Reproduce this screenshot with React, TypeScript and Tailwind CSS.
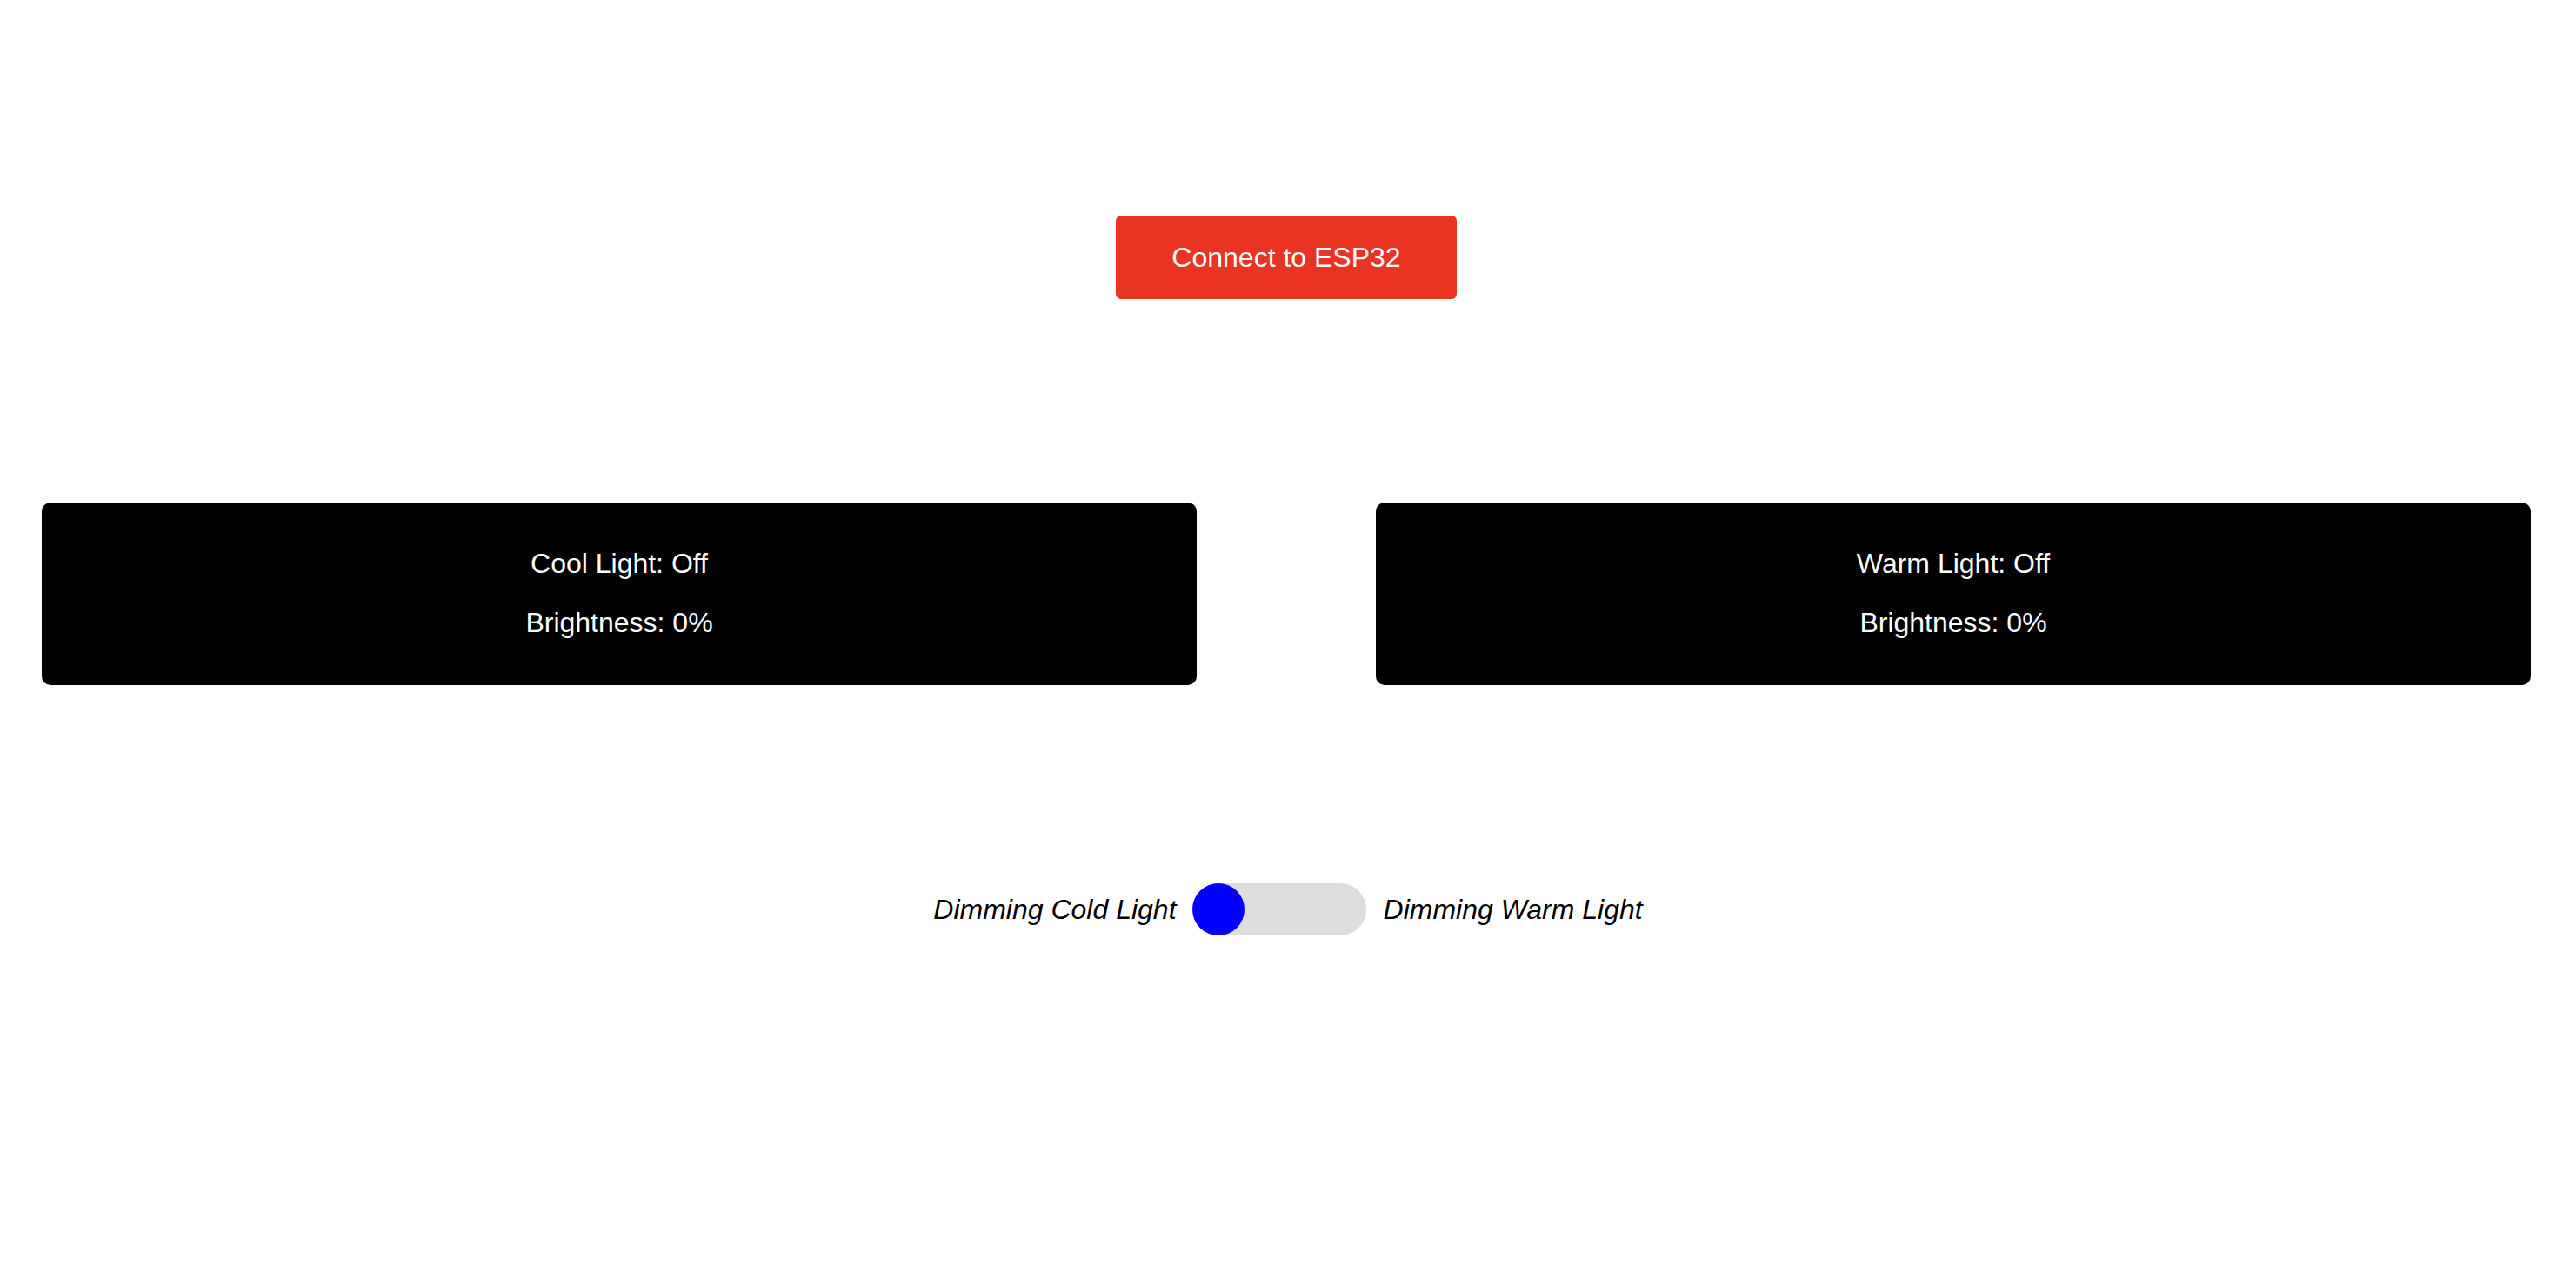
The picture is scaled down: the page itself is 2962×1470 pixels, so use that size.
import { useState } from 'react'

function LightCard({ name, on, brightness }: { name: string; on: boolean; brightness: number }) {
  return (
    <div className="w-[1328px] h-[210px] bg-black rounded-[10px] flex flex-col items-center pt-[52px] gap-[31px] text-white text-[32px] leading-[37px]">
      <p>
        {name}: {on ? 'On' : 'Off'}
      </p>
      <p>Brightness: {brightness}%</p>
    </div>
  )
}

export default function App() {
  const [warm, setWarm] = useState(false)

  return (
    <div className="min-h-[1470px] w-full bg-white flex flex-col items-center font-['Liberation_Sans',Arial,sans-serif]">
      <button className="mt-[248px] mr-[4px] w-[392px] h-[96px] bg-[#e93323] rounded-[6px] text-white text-[32px]">
        Connect to ESP32
      </button>

      <div className="mt-[234px] w-full flex justify-between pl-[48px] pr-[52px]">
        <LightCard name="Cool Light" on={false} brightness={0} />
        <LightCard name="Warm Light" on={false} brightness={0} />
      </div>

      <div className="mt-[228px] flex items-center text-[32px] italic text-black">
        <span>Dimming Cold Light</span>
        <button
          onClick={() => setWarm(!warm)}
          className={
            'mx-[18px] w-[200px] h-[60px] rounded-full bg-[#dddddd] flex items-center ' +
            (warm ? 'justify-end' : 'justify-start')
          }
        >
          <span className="w-[60px] h-[60px] rounded-full bg-[#0000ff]" />
        </button>
        <span className="ml-[2px]">Dimming Warm Light</span>
      </div>
    </div>
  )
}
